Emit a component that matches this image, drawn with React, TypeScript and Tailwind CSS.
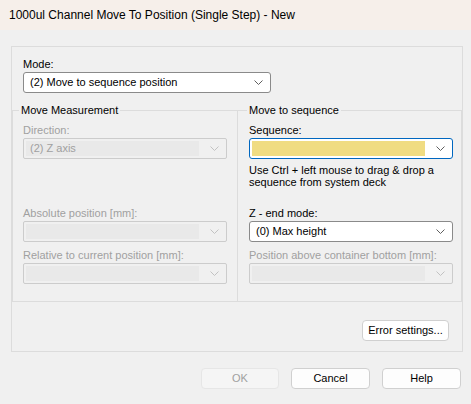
import React from 'react'

const font = { fontFamily: '"Liberation Sans", Arial, sans-serif' }

function Chevron({ disabled }: { disabled?: boolean }) {
  return (
    <svg width="9" height="5" viewBox="0 0 9 5" className="shrink-0">
      <polyline
        points="0.5,0.5 4.5,4.5 8.5,0.5"
        fill="none"
        stroke={disabled ? '#c2c2c2' : '#5f5f5f'}
        strokeWidth="1"
      />
    </svg>
  )
}

function Combo({ value, disabled, highlight, focused }: { value?: string; disabled?: boolean; highlight?: boolean; focused?: boolean }) {
  if (disabled) {
    return (
      <div className="flex h-[21px] items-center rounded-[2px] border border-[#cccccc] bg-[#f0f0f0] pl-[2px] pr-[7px]">
        <div className="flex h-[15px] flex-1 items-center bg-[#e9e9e9] pl-[4px] text-[11px] text-[#a0a0a0]">{value}</div>
        <div className="flex w-[20px] justify-end">
          <Chevron disabled />
        </div>
      </div>
    )
  }
  return (
    <div
      className={`flex h-[21px] items-center rounded-[3px] border bg-white pl-[2px] pr-[7px] ${
        focused ? 'border-[#0067c0]' : 'border-[#8a8a8a]'
      }`}
    >
      <div
        className={`flex h-[15px] flex-1 items-center pl-[4px] text-[11px] text-black ${
          highlight ? 'bg-[#f0dc82]' : ''
        }`}
      >
        {value}
      </div>
      <div className="flex w-[20px] justify-end">
        <Chevron />
      </div>
    </div>
  )
}

function Label({ children, disabled }: { children: React.ReactNode; disabled?: boolean }) {
  return (
    <div className={`h-[15px] text-[11px] leading-[15px] ${disabled ? 'text-[#a0a0a0]' : 'text-black'}`}>
      {children}
    </div>
  )
}

function DlgButton({ children, disabled, className = '' }: { children: React.ReactNode; disabled?: boolean; className?: string }) {
  return (
    <button
      className={`flex h-[21px] items-center justify-center rounded-[4px] border text-[11px] ${
        disabled ? 'border-[#e6e6e6] bg-[#f5f5f5] text-[#a0a0a0]' : 'border-[#d0d0d0] bg-[#fdfdfd] text-black'
      } ${className}`}
    >
      {children}
    </button>
  )
}

export default function App() {
  return (
    <div className="h-[404px] w-[471px] overflow-hidden bg-[#f0f0f0]" style={font}>
      {/* title bar */}
      <div className="flex h-[30px] items-center bg-[#f6efea] pl-[9px] text-[12px] text-black">
        1000ul Channel Move To Position (Single Step) - New
      </div>

      <div className="ml-[11px] mt-[16px] w-[452px] border border-[#dcdcdc] pb-[10px]">
        <div className="px-[11px] pt-[10px]">
          <Label>Mode:</Label>
          <div className="w-[248px]">
            <Combo value="(2) Move to sequence position" />
          </div>
        </div>

        <div className="mt-[10px] flex">
          <fieldset className="w-[226px] border border-[#dcdcdc] px-[10px] pb-[17px]">
            <legend className="ml-[-4px] px-[2px] text-[11px] leading-[15px] text-black">Move Measurement</legend>
            <div className="pt-[5px]">
              <Label disabled>Direction:</Label>
              <Combo value="(2) Z axis" disabled />
            </div>
            <div className="mt-[47px]">
              <Label disabled>Absolute position [mm]:</Label>
              <Combo disabled />
            </div>
            <div className="mt-[6px]">
              <Label disabled>Relative to current position [mm]:</Label>
              <Combo disabled />
            </div>
          </fieldset>

          <fieldset className="ml-[-1px] w-[225px] border border-[#dcdcdc] pl-[11px] pr-[8px] pb-[17px]">
            <legend className="ml-[-2px] px-[2px] text-[11px] leading-[15px] text-black">Move to sequence</legend>
            <div className="pt-[5px]">
              <Label>Sequence:</Label>
              <Combo focused highlight />
            </div>
            <div className="mt-[5px] text-[11px] leading-[12px] text-black">
              Use Ctrl + left mouse to drag &amp; drop a<br />
              sequence from system deck
            </div>
            <div className="mt-[18px]">
              <Label>Z - end mode:</Label>
              <Combo value="(0) Max height" />
            </div>
            <div className="mt-[6px]">
              <Label disabled>Position above container bottom [mm]:</Label>
              <Combo disabled />
            </div>
          </fieldset>
        </div>

        <div className="mt-[18px] flex justify-end pr-[13px]">
          <DlgButton className="w-[87px] rounded-[4px] border-[#cfcfcf] bg-white">Error settings...</DlgButton>
        </div>
      </div>

      <div className="mt-[16px] flex justify-end gap-[12px] pr-[10px]">
        <DlgButton disabled className="w-[78px]">OK</DlgButton>
        <DlgButton className="w-[79px]">Cancel</DlgButton>
        <DlgButton className="w-[79px]">Help</DlgButton>
      </div>
    </div>
  )
}
